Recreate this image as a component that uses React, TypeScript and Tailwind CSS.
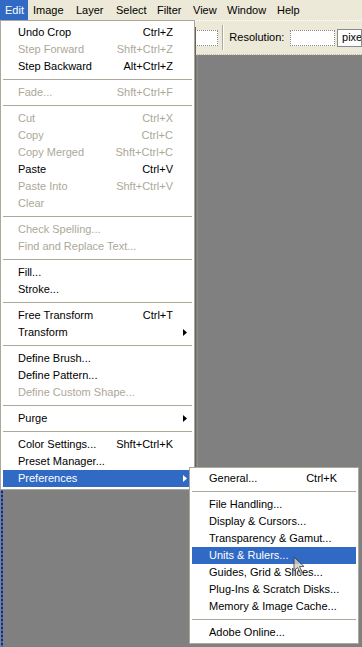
type Item =
  | { label: string; shortcut?: string; disabled?: boolean; sub?: boolean; active?: boolean }
  | 'sep'

const editItems: Item[] = [
  { label: 'Undo Crop', shortcut: 'Ctrl+Z' },
  { label: 'Step Forward', shortcut: 'Shft+Ctrl+Z', disabled: true },
  { label: 'Step Backward', shortcut: 'Alt+Ctrl+Z' },
  'sep',
  { label: 'Fade...', shortcut: 'Shft+Ctrl+F', disabled: true },
  'sep',
  { label: 'Cut', shortcut: 'Ctrl+X', disabled: true },
  { label: 'Copy', shortcut: 'Ctrl+C', disabled: true },
  { label: 'Copy Merged', shortcut: 'Shft+Ctrl+C', disabled: true },
  { label: 'Paste', shortcut: 'Ctrl+V' },
  { label: 'Paste Into', shortcut: 'Shft+Ctrl+V', disabled: true },
  { label: 'Clear', disabled: true },
  'sep',
  { label: 'Check Spelling...', disabled: true },
  { label: 'Find and Replace Text...', disabled: true },
  'sep',
  { label: 'Fill...' },
  { label: 'Stroke...' },
  'sep',
  { label: 'Free Transform', shortcut: 'Ctrl+T' },
  { label: 'Transform', sub: true },
  'sep',
  { label: 'Define Brush...' },
  { label: 'Define Pattern...' },
  { label: 'Define Custom Shape...', disabled: true },
  'sep',
  { label: 'Purge', sub: true },
  'sep',
  { label: 'Color Settings...', shortcut: 'Shft+Ctrl+K' },
  { label: 'Preset Manager...' },
  { label: 'Preferences', sub: true, active: true },
]

const prefItems: Item[] = [
  { label: 'General...', shortcut: 'Ctrl+K' },
  'sep',
  { label: 'File Handling...' },
  { label: 'Display & Cursors...' },
  { label: 'Transparency & Gamut...' },
  { label: 'Units & Rulers...', active: true },
  { label: 'Guides, Grid & Slices...' },
  { label: 'Plug-Ins & Scratch Disks...' },
  { label: 'Memory & Image Cache...' },
  'sep',
  { label: 'Adobe Online...' },
]

const menuBar = [
  { label: 'Edit', w: 'w-[28px]', active: true },
  { label: 'Image', w: 'w-[43px]' },
  { label: 'Layer', w: 'w-[40px]' },
  { label: 'Select', w: 'w-[41px]' },
  { label: 'Filter', w: 'w-[36px]' },
  { label: 'View', w: 'w-[34px]' },
  { label: 'Window', w: 'w-[50px]' },
  { label: 'Help', w: 'w-[40px]' },
]

function Arrow({ white }: { white?: boolean }) {
  return (
    <svg width="4" height="7" viewBox="0 0 4 7" className="absolute right-[5px] top-[5px]">
      <path d="M0 0 L4 3.5 L0 7 Z" fill={white ? '#ffffff' : '#000000'} />
    </svg>
  )
}

function Menu({ items, pl }: { items: Item[]; pl: string }) {
  return (
    <>
      {items.map((it, i) =>
        it === 'sep' ? (
          <div key={i} className="h-[9px] pt-[4px]">
            <div className="h-px bg-[#aca899]" />
          </div>
        ) : (
          <div
            key={i}
            className={`relative h-[17px] flex items-center pr-[19px] ${pl} ${
              it.active ? 'bg-[#316ac5] text-white' : it.disabled ? 'text-[#aca899]' : 'text-black'
            }`}
          >
            <span className="flex-1 whitespace-nowrap">{it.label}</span>
            {it.shortcut && <span className="whitespace-nowrap">{it.shortcut}</span>}
            {it.sub && <Arrow white={it.active} />}
          </div>
        )
      )}
    </>
  )
}

export default function App() {
  return (
    <div className="relative w-[362px] h-[647px] overflow-hidden flex flex-col bg-[#808080] font-['Liberation_Sans',Arial,sans-serif] text-[11px] leading-none select-none">
      {/* menu bar */}
      <div className="h-[20px] flex bg-[#ece9d8] text-black">
        {menuBar.map((m) => (
          <div
            key={m.label}
            className={`${m.w} h-full flex items-center pl-[5px] ${m.active ? 'bg-[#316ac5] text-white' : ''}`}
          >
            {m.label}
          </div>
        ))}
      </div>

      {/* options bar */}
      <div className="h-[35px] flex items-center bg-[#ece9d8] border-t border-white pl-[195px] border-b border-dotted border-b-[#c5c1aa]">
        <div className="w-[29px] h-[16px] bg-white border border-dotted border-[#8a8a8a]" />
        <div className="h-[25px] w-[2px] ml-[4px] mr-[5px] border-l border-[#aca899] border-r border-r-white" />
        <span className="mr-[6px]">Resolution:</span>
        <div className="w-[56px] h-[16px] bg-white border border-dotted border-[#8a8a8a]" />
        <div className="ml-[2px] h-[18px] w-[30px] bg-white border border-[#8a8a8a] pl-[4px] flex items-center overflow-hidden">
          pixels
        </div>
      </div>

      {/* canvas */}
      <div className="relative flex-1 bg-[#808080]">
        <div className="absolute left-[1px] top-0 bottom-0 w-[2px] bg-[repeating-linear-gradient(to_bottom,#1a2a6a_0px,#1a2a6a_2px,#3d6ad0_2px,#3d6ad0_4px)]" />
      </div>

      {/* document window edge beside the menu */}
      <div className="absolute left-[194px] top-[27px] h-[440px] w-[2px] bg-[#67655a]" />
      <div className="absolute left-[197px] top-[55px] h-[412px] w-px border-l border-dotted border-[#9a9a9a]" />

      {/* Edit menu */}
      <div className="absolute left-0 top-[20px] w-[195px] bg-white border border-[#aca899] pt-[3px] pb-[2px] px-[2px]">
        <Menu items={editItems} pl="pl-[15px]" />
      </div>

      {/* Preferences submenu */}
      <div className="absolute left-[189px] top-[467px] w-[170px] bg-white border border-[#aca899] py-[2px] px-[2px]">
        <Menu items={prefItems} pl="pl-[17px]" />
      </div>

      {/* mouse cursor */}
      <svg
        width="13"
        height="19"
        viewBox="0 0 13 19"
        className="absolute left-[293px] top-[556px] opacity-80"
      >
        <path
          d="M1 1 L1 15 L4.5 11.5 L7.5 17.5 L9.5 16.5 L6.5 10.5 L11 10.5 Z"
          fill="#cfcfc4"
          stroke="#3a3a3a"
          strokeWidth="1"
          strokeLinejoin="round"
        />
      </svg>
    </div>
  )
}
